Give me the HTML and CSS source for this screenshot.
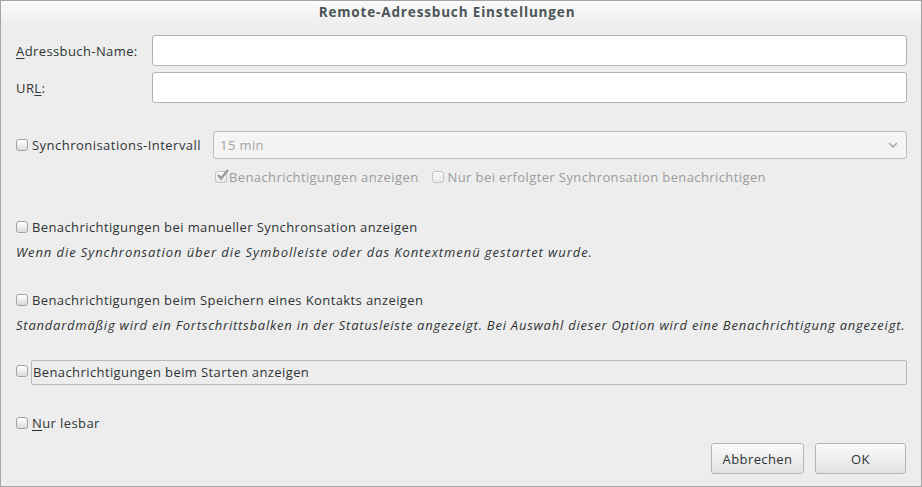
FILE: index.html
```html
<!DOCTYPE html>
<html lang="de">
<head>
<meta charset="utf-8">
<title>Remote-Adressbuch Einstellungen</title>
<link rel="stylesheet" href="styles.css">
</head>
<body>
<div class="window">
  <div class="titlebar">Remote-Adressbuch Einstellungen</div>
  <div class="content">
    <div class="form">
      <label class="lbl"><u>A</u>dressbuch-Name:</label>
      <div class="entry"></div>
      <label class="lbl">UR<u>L</u>:</label>
      <div class="entry"></div>
    </div>

    <div class="sync">
      <div class="check"><span class="box"></span><span>Synchronisations-Intervall</span></div>
      <div class="combo"><span>15 min</span>
        <svg class="arrow" width="10" height="6" viewBox="0 0 10 6"><path d="M1 1 L5 5 L9 1" fill="none" stroke="#a8a8a8" stroke-width="1.6"/></svg>
      </div>
    </div>
    <div class="subrow">
      <div class="check dis"><span class="box checked"><svg width="13" height="12" viewBox="0 0 13 12"><path d="M2 6 L5 9.5 L12 1" fill="none" stroke="#9a9a9a" stroke-width="2.4"/></svg></span><span>Benachrichtigungen anzeigen</span></div>
      <div class="check dis gap"><span class="box"></span><span>Nur bei erfolgter Synchronsation benachrichtigen</span></div>
    </div>

    <div class="check s1"><span class="box"></span><span>Benachrichtigungen bei manueller Synchronsation anzeigen</span></div>
    <div class="hint h1">Wenn die Synchronsation über die Symbolleiste oder das Kontextmenü gestartet wurde.</div>

    <div class="check s2"><span class="box"></span><span>Benachrichtigungen beim Speichern eines Kontakts anzeigen</span></div>
    <div class="hint">Standardmäßig wird ein Fortschrittsbalken in der Statusleiste angezeigt. Bei Auswahl dieser Option wird eine Benachrichtigung angezeigt.</div>

    <div class="framerow">
      <span class="box"></span>
      <div class="frame">Benachrichtigungen beim Starten anzeigen</div>
    </div>

    <div class="check s3"><span class="box"></span><span><u>N</u>ur lesbar</span></div>

    <div class="buttons">
      <button class="btn">Abbrechen</button>
      <button class="btn">OK</button>
    </div>
  </div>
</div>
</body>
</html>
```

FILE: styles.css
```css
* { box-sizing: border-box; }
html, body { margin: 0; padding: 0; background: #ededed; }
body {
  font-family: "Open Sans", "DejaVu Sans", sans-serif;
  font-size: 13px;
  letter-spacing: 0.4px;
  color: #2e3436;
}
.window {
  width: 922px;
  height: 487px;
  border: 1px solid #a4a4a4;
  background: #ededed;
  display: flex;
  flex-direction: column;
  overflow: hidden;
}
.titlebar {
  height: 24px;
  flex: none;
  background: linear-gradient(#fbfbfb, #ededed);
  text-align: center;
  font-weight: bold;
  color: #4b5558;
  line-height: 23px;
  font-size: 13.5px;
  letter-spacing: 0.85px;
  padding-right: 28px;
}
.content {
  padding: 10px 14px 0 15px;
  display: flex;
  flex-direction: column;
}
u { text-decoration: underline; text-underline-offset: 2px; }
.form {
  display: grid;
  grid-template-columns: 136px 1fr;
  row-gap: 6px;
  align-items: center;
}
.entry {
  height: 31px;
  background: #fff;
  border: 1px solid #b2b2b2;
  border-radius: 3px;
}
.check {
  display: flex;
  align-items: center;
  height: 18px;
  white-space: nowrap;
}
.box {
  width: 12px;
  height: 12px;
  flex: none;
  border: 1px solid #a2a2a2;
  border-radius: 3px;
  background: linear-gradient(#ffffff, #dcdcdc);
  margin-right: 4px;
  position: relative;
}
.box svg { position: absolute; left: 0; top: -3px; }
.sync {
  margin-top: 28px;
  display: flex;
  align-items: center;
  gap: 12px;
  height: 28px;
}
.sync .check { letter-spacing: 0.47px; }
.combo {
  flex: 1;
  height: 28px;
  border: 1px solid #bcbcbc;
  border-radius: 3px;
  background: #f4f4f4;
  color: #a2a2a2;
  display: flex;
  align-items: center;
  justify-content: space-between;
  padding: 0 8px 0 6px;
}
.subrow {
  margin-top: 8px;
  height: 20px;
  display: flex;
  align-items: center;
  padding-left: 199px;
}
.dis { color: #9c9c9c; }
.dis .box { border-color: #c4c4c4; background: linear-gradient(#fafafa, #e8e8e8); }
.dis .box.checked { margin-right: 2px; }
.gap { margin-left: 13px; }
.s1 { margin-top: 31px; }
.s2 { margin-top: 30px; }
.s3 { margin-top: 29px; }
.hint {
  font-style: italic;
  letter-spacing: 0.77px;
  margin-top: 7px;
  height: 18px;
  line-height: 18px;
  white-space: nowrap;
}
.hint.h1 { letter-spacing: 0.92px; }
.framerow {
  margin-top: 26px;
  display: flex;
  align-items: flex-start;
}
.framerow .box { margin-top: 5px; margin-right: 3px; }
.frame {
  flex: 1;
  height: 25px;
  border: 1px solid #b8b8b8;
  border-radius: 2px;
  line-height: 23px;
  padding-left: 1px;
}
.buttons {
  margin-top: 11px;
  display: flex;
  justify-content: flex-end;
  gap: 11px;
  padding-right: 1px;
}
.btn {
  font-family: inherit;
  font-size: 13px;
  letter-spacing: 0.4px;
  color: #2e3436;
  height: 31px;
  border: 1px solid #b4b4b4;
  border-radius: 3px;
  background: linear-gradient(#fafafa, #e2e2e2);
  padding: 0;
}
.btn:first-child { width: 93px; }
.btn:last-child { width: 91px; }
```
